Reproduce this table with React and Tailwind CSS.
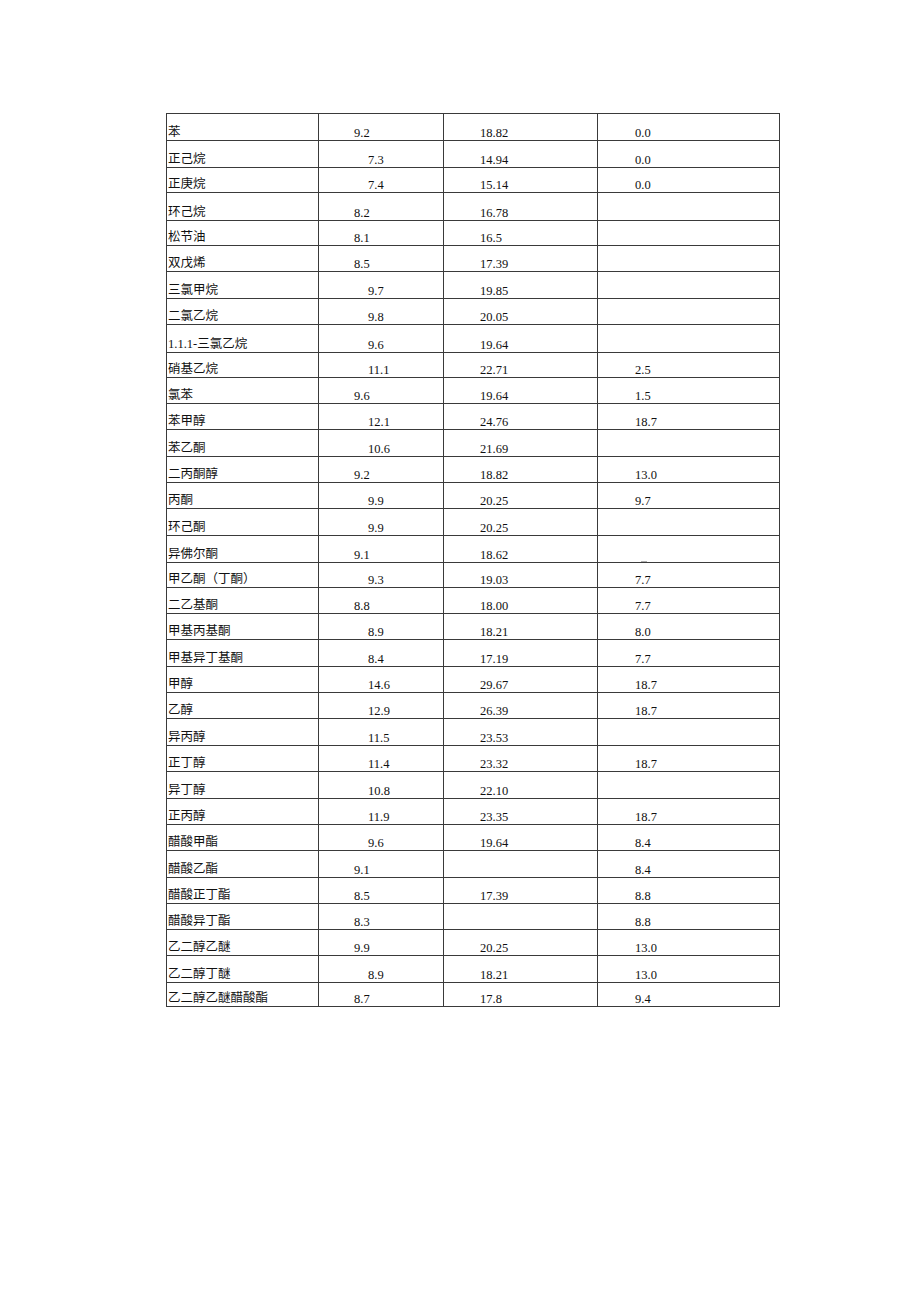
import React from "react";

const rows = [
  ["苯", "9.2", "A", "18.82", "0.0", "h-[27px]"],
  ["正己烷", "7.3", "B", "14.94", "0.0", "h-[27px]"],
  ["正庚烷", "7.4", "B", "15.14", "0.0", "h-[25px]"],
  ["环己烷", "8.2", "A", "16.78", "", "h-[28px]"],
  ["松节油", "8.1", "A", "16.5", "", "h-[25px]"],
  ["双戊烯", "8.5", "A", "17.39", "", "h-[26px]"],
  ["三氯甲烷", "9.7", "B", "19.85", "", "h-[27px]"],
  ["二氯乙烷", "9.8", "B", "20.05", "", "h-[26px]"],
  ["1.1.1-三氯乙烷", "9.6", "B", "19.64", "", "h-[28px]"],
  ["硝基乙烷", "11.1", "B", "22.71", "2.5", "h-[25px]"],
  ["氯苯", "9.6", "A", "19.64", "1.5", "h-[26px]"],
  ["苯甲醇", "12.1", "B", "24.76", "18.7", "h-[26px]"],
  ["苯乙酮", "10.6", "B", "21.69", "", "h-[27px]"],
  ["二丙酮醇", "9.2", "A", "18.82", "13.0", "h-[26px]"],
  ["丙酮", "9.9", "B", "20.25", "9.7", "h-[26px]"],
  ["环己酮", "9.9", "B", "20.25", "", "h-[27px]"],
  ["异佛尔酮", "9.1", "A", "18.62", "MARK", "h-[27px]"],
  ["甲乙酮（丁酮）", "9.3", "B", "19.03", "7.7", "h-[25px]"],
  ["二乙基酮", "8.8", "A", "18.00", "7.7", "h-[26px]"],
  ["甲基丙基酮", "8.9", "B", "18.21", "8.0", "h-[26px]"],
  ["甲基异丁基酮", "8.4", "B", "17.19", "7.7", "h-[27px]"],
  ["甲醇", "14.6", "B", "29.67", "18.7", "h-[26px]"],
  ["乙醇", "12.9", "B", "26.39", "18.7", "h-[26px]"],
  ["异丙醇", "11.5", "B", "23.53", "", "h-[27px]"],
  ["正丁醇", "11.4", "B", "23.32", "18.7", "h-[26px]"],
  ["异丁醇", "10.8", "B", "22.10", "", "h-[27px]"],
  ["正丙醇", "11.9", "B", "23.35", "18.7", "h-[26px]"],
  ["醋酸甲酯", "9.6", "B", "19.64", "8.4", "h-[26px]"],
  ["醋酸乙酯", "9.1", "A", "", "8.4", "h-[27px]"],
  ["醋酸正丁酯", "8.5", "A", "17.39", "8.8", "h-[26px]"],
  ["醋酸异丁酯", "8.3", "A", "", "8.8", "h-[26px]"],
  ["乙二醇乙醚", "9.9", "A", "20.25", "13.0", "h-[26px]"],
  ["乙二醇丁醚", "8.9", "B", "18.21", "13.0", "h-[27px]"],
  ["乙二醇乙醚醋酸酯", "8.7", "A", "17.8", "9.4", "h-[24px]"],
];

const cell =
  "flex items-end border-r border-b border-[#3a3a3a] text-[12.5px] leading-[13px] font-['Liberation_Serif','Noto_Sans_CJK_SC',serif]";

export default function App() {
  return (
    <div className="min-h-[1301px] w-[920px] bg-white pt-[113px] pl-[166px] text-[#111]">
      <div className="w-[614px] border-l border-t border-[#3a3a3a]">
        {rows.map(([name, v1, pos, v2, v3, h], i) => (
          <div key={i} className={`grid grid-cols-[152px_125px_154px_182px] ${h}`}>
            <div className={`${cell} pl-[1px] pb-[1px] whitespace-nowrap`}>{name}</div>
            <div className={`${cell} ${pos === "A" ? "pl-[35px]" : "pl-[49px]"}`}>{v1}</div>
            <div className={`${cell} pl-[36px]`}>{v2}</div>
            <div className={`${cell} pl-[37px]`}>
              {v3 === "MARK" ? (
                <span className="ml-[6px] block h-[1px] w-[6px] bg-[#b0b0b0]" />
              ) : (
                v3
              )}
            </div>
          </div>
        ))}
      </div>
    </div>
  );
}
